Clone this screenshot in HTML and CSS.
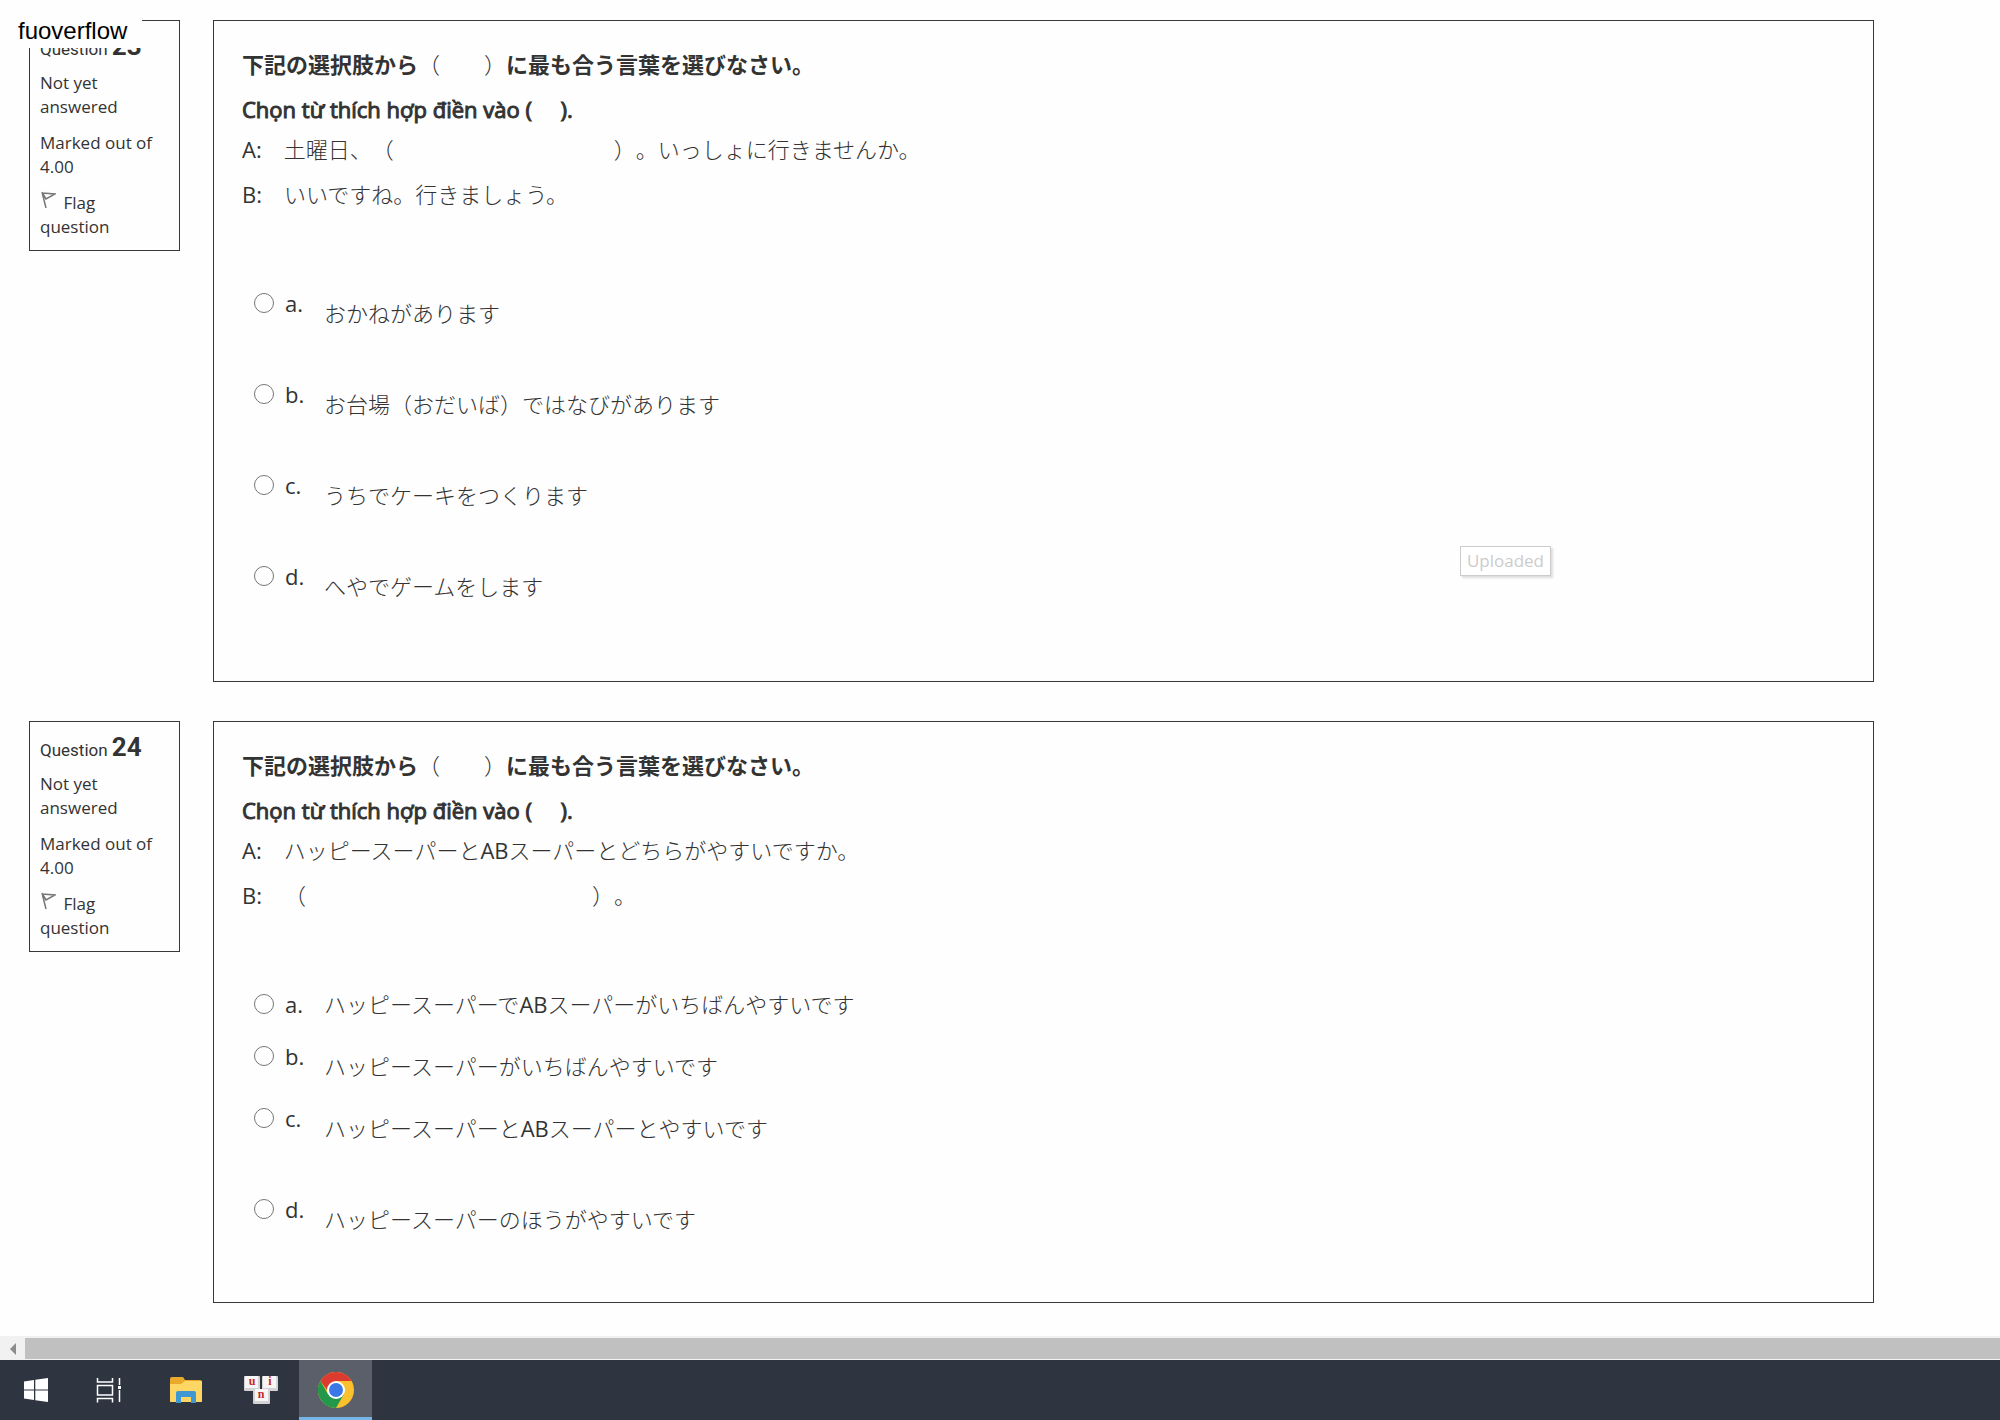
FILE: index.html
```html
<!DOCTYPE html>
<html lang="ja">

<head>
    <meta charset="UTF-8">
    <meta name="viewport" content="width=device-width, initial-scale=1.0">
    <title>Quiz</title>
    <link rel="stylesheet" href="styles.css">
</head>

<body>
    <div class="watermark">fuoverflow</div>

    <main class="quiz">
        <section class="question">
            <aside class="info">
                <h3 class="number">Question <strong>23</strong></h3>
                <p>Not yet answered</p>
                <p>Marked out of 4.00</p>
                <a href="#" class="flag">
                    <svg width="16" height="18" viewBox="0 0 16 18"><path d="M2 1l4 16M2 2l13 1-9 5-3-5" fill="none" stroke="#777" stroke-width="1.5"/></svg>
                    Flag question
                </a>
            </aside>
            <form class="content">
                <div class="prompt">
                    <p><b>下記の選択肢から</b>（　　）<b>に最も合う言葉を選びなさい。</b></p>
                    <p class="vn">Chọn từ thích hợp điền vào ( &nbsp; &nbsp; ).</p>
                    <p class="line-a"><span class="latin">A:</span>　土曜日、（　　　　　　　　　　）。いっしょに行きませんか。</p>
                    <p><span class="latin">B:</span>　いいですね。行きましょう。</p>
                </div>
                <div class="options">
                    <div class="option gap-lg">
                        <input type="radio" name="q23" id="q23a">
                        <label for="q23a"><span class="letter">a.</span><span class="text low">おかねがあります</span></label>
                    </div>
                    <div class="option gap-lg">
                        <input type="radio" name="q23" id="q23b">
                        <label for="q23b"><span class="letter">b.</span><span class="text low">お台場（おだいば）ではなびがあります</span></label>
                    </div>
                    <div class="option gap-lg">
                        <input type="radio" name="q23" id="q23c">
                        <label for="q23c"><span class="letter">c.</span><span class="text low">うちでケーキをつくります</span></label>
                    </div>
                    <div class="option gap-lg">
                        <input type="radio" name="q23" id="q23d">
                        <label for="q23d"><span class="letter">d.</span><span class="text low">へやでゲームをします</span></label>
                    </div>
                </div>
                <div class="tooltip">Uploaded</div>
            </form>
        </section>

        <section class="question">
            <aside class="info">
                <h3 class="number">Question <strong>24</strong></h3>
                <p>Not yet answered</p>
                <p>Marked out of 4.00</p>
                <a href="#" class="flag">
                    <svg width="16" height="18" viewBox="0 0 16 18"><path d="M2 1l4 16M2 2l13 1-9 5-3-5" fill="none" stroke="#777" stroke-width="1.5"/></svg>
                    Flag question
                </a>
            </aside>
            <form class="content">
                <div class="prompt">
                    <p><b>下記の選択肢から</b>（　　）<b>に最も合う言葉を選びなさい。</b></p>
                    <p class="vn">Chọn từ thích hợp điền vào ( &nbsp; &nbsp; ).</p>
                    <p class="line-a"><span class="latin">A:</span>　ハッピースーパーと<span class="latin">AB</span>スーパーとどちらがやすいですか。</p>
                    <p><span class="latin">B:</span>　（　　　　　　　　　　　　　）。</p>
                </div>
                <div class="options">
                    <div class="option gap-sm">
                        <input type="radio" name="q24" id="q24a">
                        <label for="q24a"><span class="letter">a.</span><span class="text">ハッピースーパーで<span class="latin">AB</span>スーパーがいちばんやすいです</span></label>
                    </div>
                    <div class="option gap-sm">
                        <input type="radio" name="q24" id="q24b">
                        <label for="q24b"><span class="letter">b.</span><span class="text low">ハッピースーパーがいちばんやすいです</span></label>
                    </div>
                    <div class="option gap-lg">
                        <input type="radio" name="q24" id="q24c">
                        <label for="q24c"><span class="letter">c.</span><span class="text low">ハッピースーパーと<span class="latin">AB</span>スーパーとやすいです</span></label>
                    </div>
                    <div class="option gap-md">
                        <input type="radio" name="q24" id="q24d">
                        <label for="q24d"><span class="letter">d.</span><span class="text low">ハッピースーパーのほうがやすいです</span></label>
                    </div>
                </div>
            </form>
        </section>
    </main>

    <div class="scrollbar">
        <button type="button" class="scroll-left" aria-label="Scroll left">
            <svg width="8" height="12" viewBox="0 0 8 12"><path d="M7 0v12L1 6z" fill="#8c8c8c"/></svg>
        </button>
        <div class="thumb"></div>
    </div>

    <nav class="taskbar">
        <button type="button" class="start" aria-label="Start">
            <svg width="24" height="24" viewBox="0 0 24 24" fill="#fff"><path d="M0 3.400L10 2v9.400H0zM11.300 1.800L24 0v11.400H11.300zM0 12.600h10V22L0 20.600zM11.300 12.600H24V24l-12.700-1.800z"/></svg>
        </button>
        <button type="button" class="task-view" aria-label="Task View">
            <svg width="26" height="26" viewBox="0 0 26 26" fill="none" stroke="#fff" stroke-width="1.500"><path d="M1.500 1v4h15V1M1.500 8.500h15v9.500h-15zM1.500 25.500v-4h15v4M23.500 1v7M23.500 13v12"/><path d="M22 9h3v3h-3z" fill="#fff" stroke="none"/></svg>
        </button>
        <button type="button" aria-label="File Explorer">
            <svg width="32" height="28" viewBox="0 0 32 28"><path d="M0 3q0-2 2-2h11l2 3h15q2 0 2 2v19q0 1-1 1H1q-1 0-1-1z" fill="#e9a92c"/><path d="M0 8h11l4-3h16q1 0 1 1v19q0 1-1 1H1q-1 0-1-1z" fill="#fdd663"/><path d="M6 27V17q0-2 2-2h16q2 0 2 2v10h-5v-6H11v6z" fill="#3f97d3"/></svg>
        </button>
        <button type="button" aria-label="Keyboard">
            <svg width="36" height="30" viewBox="0 0 36 30" class="keys">
                <rect x="1" y="1" width="16" height="15" rx="1" fill="#d3d3d3"/><rect x="2" y="1" width="13" height="12" fill="#f7f5f5"/>
                <rect x="19" y="1" width="16" height="15" rx="1" fill="#d3d3d3"/><rect x="20" y="1" width="13" height="12" fill="#f7f5f5"/>
                <rect x="10" y="14" width="17" height="15" rx="1" fill="#d3d3d3"/><rect x="12" y="14" width="13" height="12" fill="#f7f5f5"/>
                <text x="9" y="10">u</text><text x="27" y="10">i</text><text x="18" y="23">n</text>
            </svg>
        </button>
        <button type="button" class="active" aria-label="Chrome">
            <svg width="36" height="36" viewBox="0 0 36 36"><circle cx="18" cy="18" r="18" fill="#fbc02d"/><path d="M18 18h-9L2.400 9A18 18 0 0 1 33.600 9H18z" fill="#dd3b30"/><path d="M2.400 9A18 18 0 0 0 18 36l7.800-13.500L18 18l-7.800 4.500z" fill="#24984a"/><circle cx="18" cy="18" r="9" fill="#fff"/><circle cx="18" cy="18" r="7" fill="#3b78e7"/></svg>
        </button>
    </nav>
</body>

</html>
```
FILE: styles.css
```css
* {
    box-sizing: border-box;
}

body {
    display: flex;
    flex-direction: column;
    height: 100vh;
    margin: 0;
    background-color: #fefefe;
    color: #333;
    font-family: "Open Sans", "Noto Sans CJK JP", sans-serif;
    font-size: 22px;
    line-height: 32px;
    text-spacing-trim: space-all;
}

p {
    margin: 0;
}

.watermark {
    position: absolute;
    top: 8px;
    left: 8px;
    z-index: 1;
    padding: 7px 15px 1px 10px;
    background-color: #fefefe;
    color: #000;
    font-family: "Liberation Sans", Arial, sans-serif;
    font-size: 24px;
}

.quiz {
    flex: 1;
    min-height: 0;
    overflow: hidden;
    padding: 20px 126px 0 29px;
}

.question {
    display: flex;
    align-items: flex-start;
    gap: 33px;
    margin-bottom: 39px;
}

.info {
    flex: none;
    width: 151px;
    padding: 9px 10px 11px;
    border: 1px solid #383838;
    font-size: 17px;
    line-height: 24px;
}

.info p {
    margin-bottom: 12px;
}

.number {
    margin: 0 0 6px;
    font-family: Roboto, sans-serif;
    font-size: 17px;
    font-weight: 400;
    line-height: 32px;
    white-space: nowrap;
}

.number strong {
    font-size: 26px;
}

.flag {
    display: block;
    color: #333;
    text-decoration: none;
}

.flag svg {
    margin-right: 3px;
}

.content {
    position: relative;
    flex: 1;
    padding: 27px 28px 30px;
    border: 1px solid #383838;
    font-weight: 300;
}

.prompt {
    margin-bottom: 77px;
}

.prompt p + p {
    margin-top: 13px;
}

.prompt p + .line-a {
    margin-top: 8px;
}

.prompt b {
    font-weight: 700;
}

/* regular width with a heavier stroke */
.prompt .vn {
    font-weight: 400;
    -webkit-text-stroke: 1px #333;
}

.latin {
    font-weight: 400;
}

.options {
    padding-left: 12px;
}

.option {
    display: flex;
    align-items: flex-start;
}

.option input {
    width: 20px;
    height: 20px;
    margin: 6px 11px 0 0;
}

.option label {
    display: flex;
}

.letter {
    width: 39px;
    font-weight: 400;
}

.low {
    margin-top: 10px;
}

.gap-sm {
    margin-bottom: 20px;
}

.gap-md {
    margin-bottom: 37px;
}

.gap-lg {
    margin-bottom: 49px;
}

.tooltip {
    position: absolute;
    top: 525px;
    right: 322px;
    padding: 2px 6px;
    border: 1px solid #ccc;
    background-color: #fff;
    box-shadow: 2px 2px 2px #ddd;
    color: #ccc;
    font-size: 17px;
    font-weight: 400;
    line-height: 24px;
}

.scrollbar {
    display: flex;
    flex: none;
    height: 24px;
    padding: 2px 0 1px;
    background-color: #f1f1f1;
}

.scroll-left {
    display: flex;
    align-items: center;
    justify-content: center;
    width: 25px;
    padding: 0;
    border: none;
    background: none;
}

.thumb {
    flex: 1;
    background-color: #c0c0c0;
}

.taskbar {
    display: flex;
    flex: none;
    gap: 2px;
    height: 60px;
    background-color: #2f3540;
}

.taskbar button {
    display: flex;
    align-items: center;
    justify-content: center;
    width: 73px;
    padding: 0;
    border: none;
    background: none;
}

.taskbar .start {
    width: 72px;
}

.taskbar .task-view {
    padding-right: 4px;
}

.taskbar .active {
    background-color: #5a5f69;
    box-shadow: inset 0 -3px #76b5e8;
}

.keys text {
    fill: #c62828;
    font-family: "Liberation Serif", serif;
    font-size: 12px;
    font-weight: 700;
    text-anchor: middle;
}
```
